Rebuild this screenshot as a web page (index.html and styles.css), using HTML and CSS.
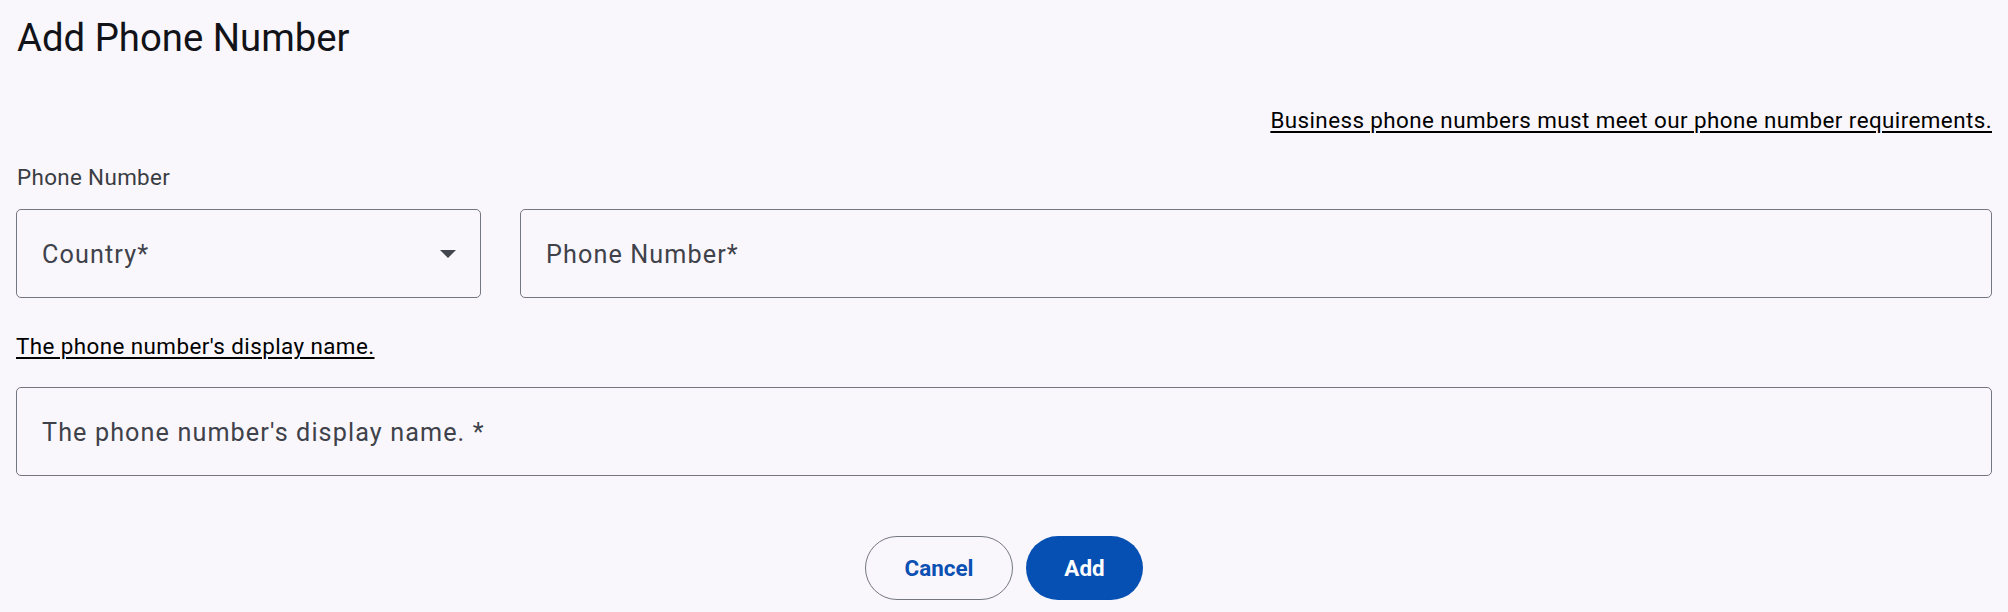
FILE: index.html
```html
<!DOCTYPE html>
<html lang="en">
<head>
<meta charset="utf-8">
<title>Add Phone Number</title>
<link rel="stylesheet" href="styles.css">
</head>
<body>
<div class="page">
  <h1 class="title">Add Phone Number</h1>
  <div class="notice-row">
    <a class="link" href="#">Business phone numbers must meet our phone number requirements.</a>
  </div>
  <div class="section-label">Phone Number</div>
  <div class="phone-row">
    <div class="field field-select">
      <span class="field-text">Country*</span>
      <svg class="caret" width="16" height="8" viewBox="0 0 16 8" aria-hidden="true"><path d="M0 0 L16 0 L8 8 Z" fill="#43464d"/></svg>
    </div>
    <div class="field field-grow">
      <span class="field-text">Phone Number*</span>
    </div>
  </div>
  <div class="name-row">
    <a class="link" href="#">The phone number's display name.</a>
  </div>
  <div class="field field-full">
    <span class="field-text">The phone number's display name. *</span>
  </div>
  <div class="actions">
    <button class="btn btn-outline" type="button">Cancel</button>
    <button class="btn btn-filled" type="button">Add</button>
  </div>
</div>
</body>
</html>
```

FILE: styles.css
```css
html, body {
  margin: 0;
  padding: 0;
  background: #f9f7fc;
}

body {
  font-family: Roboto, "Noto Sans", "Liberation Sans", sans-serif;
  color: #1b1b1f;
}

.page {
  padding: 0 16px;
  display: flex;
  flex-direction: column;
}

.title {
  margin: 14px 0 0 1px;
  font-size: 38.3px;
  line-height: 48px;
  font-weight: 400;
  color: #111318;
}

.notice-row {
  margin-top: 44px;
  display: flex;
  justify-content: flex-end;
  line-height: 28px;
}

.link {
  font-size: 22.4px;
  letter-spacing: 0.42px;
  color: #000;
  text-decoration: underline;
  text-underline-offset: 3px;
  text-decoration-thickness: 2px;
}

.section-label {
  margin-top: 27px;
  margin-left: 1px;
  font-size: 22.4px;
  letter-spacing: 0.35px;
  line-height: 32px;
  color: #3a3d43;
}

.phone-row {
  margin-top: 16px;
  display: flex;
  gap: 39px;
}

.field {
  box-sizing: border-box;
  height: 89px;
  border: 1px solid #74777f;
  border-radius: 5px;
  display: flex;
  align-items: center;
  padding: 2px 25px 0 25px;
}

.field-select {
  width: 465px;
  flex: none;
  justify-content: space-between;
  padding-right: 24px;
}

.caret {
  display: block;
  margin-top: -2px;
}

.field-grow {
  flex: 1;
}

.field-text {
  font-size: 25.2px;
  letter-spacing: 1.1px;
  color: #3f424a;
}

.name-row {
  margin-top: 34px;
  line-height: 28px;
  display: flex;
}

.field-full {
  margin-top: 27px;
}

.actions {
  margin-top: 60px;
  display: flex;
  justify-content: center;
  gap: 13px;
}

.btn {
  box-sizing: border-box;
  height: 64px;
  border-radius: 32px;
  font-family: Roboto, "Noto Sans", sans-serif;
  font-size: 22.4px;
  font-weight: 700;
  padding: 0;
  cursor: pointer;
}

.btn-outline {
  width: 148px;
  background: transparent;
  border: 1px solid #74777f;
  color: #0b50b2;
}

.btn-filled {
  width: 117px;
  background: #0650b4;
  border: none;
  color: #ffffff;
}
```
